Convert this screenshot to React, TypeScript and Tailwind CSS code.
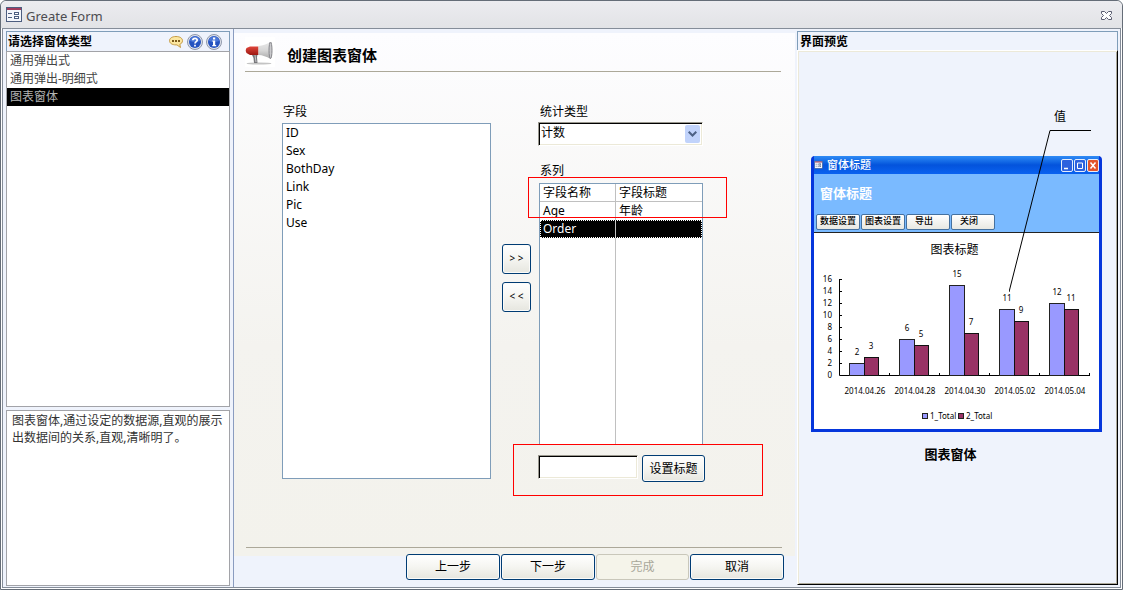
import { useState } from "react";
import clsx from "clsx";

const FORM_TYPES = ["通用弹出式", "通用弹出-明细式", "图表窗体"];
const FIELDS = ["ID", "Sex", "BothDay", "Link", "Pic", "Use"];
const SERIES = [
  { name: "Age", title: "年龄" },
  { name: "Order", title: "" },
];
const CHART = [
  { date: "2014.04.26", first: 2, second: 3 },
  { date: "2014.04.28", first: 6, second: 5 },
  { date: "2014.04.30", first: 15, second: 7 },
  { date: "2014.05.02", first: 11, second: 9 },
  { date: "2014.05.04", first: 12, second: 11 },
];
const TICKS = [0, 2, 4, 6, 8, 10, 12, 14, 16];

const buttonClass =
  "rounded-[3px] border border-[#003c74] bg-linear-to-b from-white via-[#f5f5f1] to-[#e6e6df] text-xs text-black shadow-[inset_0_0_0_1px_#fbfbf9] disabled:border-[#c9c7ba] disabled:bg-none disabled:bg-[#f5f4ea] disabled:text-[#a9a79a] disabled:shadow-none";
const sunkenClass =
  "border border-t-[#9a988e] border-l-[#9a988e] border-r-white border-b-white bg-white text-xs text-black shadow-[inset_1px_1px_0_#000,inset_-1px_-1px_0_#ece9d8] outline-none";

function FormIcon({ className }: { className?: string }) {
  return (
    <svg viewBox="0 0 16 16" className={className} aria-hidden="true">
      <rect x="0.5" y="0.5" width="15" height="14" fill="#f4f6fb" stroke="#4d5e80" />
      <rect x="1" y="1" width="14" height="2" fill="#a13b5d" />
      <path d="M2 6.5h4M2 10.5h4" stroke="#4d5e80" />
      <rect x="8.5" y="5.5" width="4" height="2" fill="#fff" stroke="#4d5e80" />
      <rect x="8.5" y="9.5" width="4" height="2" fill="#fff" stroke="#4d5e80" />
    </svg>
  );
}

function BubbleIcon() {
  return (
    <svg viewBox="0 0 16 16" className="size-4" aria-hidden="true">
      <path
        d="M8 2.5c4 0 6.5 1.8 6.5 4.2 0 1.7-1 2.9-2.7 3.6l.7 3.2L9 10.9H8c-4 0-6.5-1.8-6.5-4.2S4 2.500 8 2.500z"
        fill="#fbe6a0"
        stroke="#c59b45"
      />
      <path d="M4 6h2v2H4zM7 6h2v2H7zM10 6h2v2h-2z" fill="#7b5a1c" />
    </svg>
  );
}

function RoundIcon({ kind }: { kind: "help" | "info" }) {
  return (
    <svg viewBox="0 0 16 16" className="size-4" aria-hidden="true">
      <circle cx="8" cy="8" r="7.5" fill="#dfe3ec" stroke="#8f98ab" />
      <circle cx="8" cy="8" r="6" fill="#2553c0" />
      <path d="M3 7a5 4.5 0 0 1 10 0q-5 2-10 0z" fill="#4a77d8" />
      {kind === "help" ? (
        <g fill="none" stroke="#fff" strokeWidth="1.7">
          <path d="M5.800 6.300C5.900 3.800 10.200 3.900 10.200 6.200 10.200 7.700 8 7.600 8 9.600" />
          <path d="M8 10.7v1.7" />
        </g>
      ) : (
        <path d="M7 3.500h2.200v2H7zM6.300 6.500h2.900v4.600h1v1.200H6.300v-1.200H7V7.600h-.7z" fill="#fff" />
      )}
    </svg>
  );
}

function MegaphoneIcon() {
  return (
    <svg viewBox="0 0 30 30" className="size-[30px] shrink-0" aria-hidden="true">
      <defs>
        <linearGradient id="horn" x1="0" y1="0" x2="0" y2="1">
          <stop offset="0" stopColor="#e9e9e9" />
          <stop offset="0.5" stopColor="#d6d6d6" />
          <stop offset="1" stopColor="#a9a9a9" />
        </linearGradient>
        <linearGradient id="grip" x1="0" y1="0" x2="0" y2="1">
          <stop offset="0" stopColor="#e0463b" />
          <stop offset="1" stopColor="#9c1712" />
        </linearGradient>
      </defs>
      <rect width="30" height="30" fill="#fff" />
      <ellipse cx="14" cy="26.5" rx="12.5" ry="1" fill="#c4c4c4" />
      <path d="M6.5 17h6l-.5 3.500.5 5.500H9l-.5-5z" fill="#77777b" />
      <path d="M10 18l1 7" stroke="#c9c9cc" />
      <path d="M1.500 11L5 9.500h8.500V18H5l-3.500-2Q0 13.500 1.500 11z" fill="url(#grip)" />
      <path d="M13.500 9c4-.3 8-1.800 12-4v17C21.500 19.500 17.500 18.200 13.500 18z" fill="url(#horn)" />
      <ellipse cx="25.5" cy="13.300" rx="1.500" ry="8.300" fill="#c9c9cc" stroke="#85858a" />
    </svg>
  );
}

function Chart() {
  return (
    <svg viewBox="0 0 285 169" className="h-[169px] w-[285px]" role="img" aria-label="图表标题" fontSize="8">
      <path d="M25.5 19v96.5H276" fill="none" stroke="#000" />
      {TICKS.map((tick) => (
        <g key={tick}>
          <path d={`M26 ${115.5 - tick * 6}h2`} stroke="#000" />
          <text x="18" y={118 - tick * 6} textAnchor="end">
            {tick}
          </text>
        </g>
      ))}
      {CHART.map((item, index) => {
        const x = 36 + index * 50;
        return (
          <g key={item.date}>
            <rect x={x - 0.5} y={115.5 - item.first * 6} width="15" height={item.first * 6} fill="#9999ff" stroke="#222" />
            <rect x={x + 14.5} y={115.5 - item.second * 6} width="14" height={item.second * 6} fill="#993366" stroke="#111" />
            <path d={`M${x + 39.5} 113v2`} stroke="#000" />
            <g textAnchor="middle">
              <text x={x + 7} y={107 - item.first * 6}>
                {item.first}
              </text>
              <text x={x + 21} y={107 - item.second * 6}>
                {item.second}
              </text>
              <text x={x + 15} y="134">
                {item.date}
              </text>
            </g>
          </g>
        );
      })}
      <rect x="108.5" y="153.5" width="5" height="5" fill="#9999ff" stroke="#222" />
      <text x="116" y="159">
        1_Total
      </text>
      <rect x="144.5" y="153.5" width="5" height="5" fill="#993366" stroke="#222" />
      <text x="152" y="159">
        2_Total
      </text>
    </svg>
  );
}

function PreviewWindow() {
  return (
    <div className="w-[291px] rounded-t border-x-[3px] border-b-[3px] border-[#0536dc] bg-[#0536dc]">
      <div className="flex h-[18px] items-center gap-1 bg-linear-to-b from-[#2f8bf5] via-[#0453dc] to-[#0a62f0] text-[11px] leading-4 font-medium text-white">
        <FormIcon className="h-2 w-[9px]" />
        <span className="flex-1">窗体标题</span>
        <svg viewBox="0 0 39 13" className="h-[13px] w-[39px]" aria-hidden="true">
          <g stroke="#e5ecfb">
            <rect x="1.5" y="0.5" width="11" height="12" rx="1.5" fill="#2d62de" />
            <rect x="14.5" y="0.5" width="11" height="12" rx="1.5" fill="#2d62de" />
            <rect x="27.5" y="0.5" width="11" height="12" rx="1.5" fill="#e2552d" />
          </g>
          <path d="M4 9.500h4M30.500 3.500l5 6M35.500 3.500l-5 6" stroke="#fff" strokeWidth="1.5" />
          <path d="M17.500 4v5.500h5V4z" fill="none" stroke="#fff" />
        </svg>
      </div>
      <div className="flex h-[59px] flex-col justify-between border-b border-[#222] bg-[#7abaff] px-0.5 pb-0.5">
        <p className="px-1 pt-2.5 text-[13px] leading-[18px] font-bold text-white">窗体标题</p>
        <div className="flex gap-px">
          {["数据设置", "图表设置", "导出", "关闭"].map((label) => (
            <button
              key={label}
              type="button"
              className={clsx(
                "h-4 w-11 rounded-xs border border-[#45719f] bg-linear-to-b from-white to-[#e8e8e2] pb-0.5 text-[9px] leading-3 font-medium",
                label.length < 4 && "pr-2",
              )}
            >
              {label}
            </button>
          ))}
        </div>
      </div>
      <div className="bg-white pt-1.5">
        <p className="pr-1 text-center text-xs leading-[21px]">图表标题</p>
        <Chart />
      </div>
    </div>
  );
}

export default function App() {
  const [formType, setFormType] = useState("图表窗体");
  const [selected, setSelected] = useState("Order");

  return (
    <div className="flex min-h-screen flex-col rounded-t-md border border-[#656d78] bg-white font-['Noto_Sans','Noto_Sans_CJK_SC',sans-serif] text-xs text-black">
      <header className="flex h-[27px] shrink-0 items-center gap-1 rounded-t-md bg-linear-to-b from-[#ececf0] to-[#e2e3e6] pr-[9px] pl-[5px]">
        <FormIcon className="size-4" />
        <h1 className="flex-1 pt-0.5 text-[13px] leading-5 text-[#4c4c50]">Greate Form</h1>
        <button type="button" aria-label="关闭" className="pt-0.5">
          <svg viewBox="0 0 13 11" className="h-[11px] w-[13px]" aria-hidden="true">
            <path
              d="M1.500 1.500h3l2 2 2-2h3v2l-2 2 2 2v2h-3l-2-2-2 2h-3v-2l2-2-2-2z"
              fill="#fff"
              stroke="#5a5d70"
            />
          </svg>
        </button>
      </header>

      <main className="mx-px mb-px flex flex-1 border border-[#858d99] bg-[#eff3fc]">
        <aside className="flex w-[231px] shrink-0 flex-col border-r border-[#8a9cc0] px-[3px] pt-0.5 pb-px">
          <div className="flex h-5 items-center border border-b-0 border-[#7f9db9] px-px">
            <h2 className="flex-1 font-bold">请选择窗体类型</h2>
            <div className="flex gap-[3px] pr-1.5">
              <button type="button" aria-label="消息">
                <BubbleIcon />
              </button>
              <button type="button" aria-label="帮助">
                <RoundIcon kind="help" />
              </button>
              <button type="button" aria-label="信息">
                <RoundIcon kind="info" />
              </button>
            </div>
          </div>
          <ul className="flex-1 border border-[#a2a3a8] bg-white">
            {FORM_TYPES.map((type) => (
              <li key={type}>
                <button
                  type="button"
                  onClick={() => setFormType(type)}
                  className={clsx(
                    "block h-[18px] w-full px-[3px] text-left leading-[18px]",
                    type === formType ? "bg-black text-[#b4b4b4]" : "text-[#444]",
                  )}
                >
                  {type}
                </button>
              </li>
            ))}
          </ul>
          <p className="mt-[3px] h-44 border border-[#a2a3a8] bg-white px-[5px] py-px leading-[17px] text-[#333]">
            图表窗体,通过设定的数据源,直观的展示出数据间的关系,直观,清晰明了。
          </p>
        </aside>

        <form className="flex min-w-0 flex-1 flex-col pt-1" onSubmit={(event) => event.preventDefault()}>
          <section className="mr-0.5 flex flex-1 flex-col bg-linear-to-b from-[#fdfdff] via-[#f4f3ef] via-60% to-[#f3f2ec]">
            <div className="mr-3.5 ml-[11px] flex h-[39px] items-center gap-3 border-b border-[#aca899]">
              <MegaphoneIcon />
              <h2 className="pt-1.5 text-[15px] leading-5 font-bold">创建图表窗体</h2>
            </div>

            <div className="flex flex-1 items-start pt-[31px] pl-12">
              <div className="w-[209px]">
                <h3 className="pl-px leading-[18px]">字段</h3>
                <ul className="mt-0.5 h-[356px] border border-[#7f9db9] bg-white">
                  {FIELDS.map((field) => (
                    <li key={field}>
                      <button type="button" className="block h-[18px] w-full px-[3px] text-left leading-[18px]">
                        {field}
                      </button>
                    </li>
                  ))}
                </ul>
              </div>

              <div className="mt-[141px] ml-[11px] flex flex-col gap-2">
                <button type="button" className={clsx(buttonClass, "h-[30px] w-[29px] text-[10px]")}>
                  &gt; &gt;
                </button>
                <button type="button" className={clsx(buttonClass, "h-[30px] w-[29px] text-[10px]")}>
                  &lt; &lt;
                </button>
              </div>

              <div className="ml-[7px]">
                <label htmlFor="stat" className="block pl-0.5 leading-[18px]">
                  统计类型
                </label>
                <div className="relative mt-px w-[165px]">
                  <select id="stat" className={clsx(sunkenClass, "h-6 w-full appearance-none px-0.5 pb-0.5")}>
                    <option>计数</option>
                  </select>
                  <span className="pointer-events-none absolute top-[3px] right-[3px] flex h-[18px] w-[15px] items-center justify-center rounded-xs bg-[#c1d3fb]">
                    <svg viewBox="0 0 9 6" className="h-1.5 w-[9px]" aria-hidden="true">
                      <path d="M0.700 0.700l3.800 3.800L8.300 0.700" fill="none" stroke="#4d6185" strokeWidth="2" />
                    </svg>
                  </span>
                </div>

                <h3 className="mt-4 pl-0.5 leading-[18px]">系列</h3>
                <div className="relative mt-[3px] w-[165px] pl-px">
                  <table className="h-[261px] w-full table-fixed border-separate border-spacing-0 border border-b-0 border-[#7f9db9] bg-white text-left">
                    <thead>
                      <tr className="h-[18px]">
                        <th className="w-[76px] border-r border-b border-[#c0c0c0] p-0 pl-[3px] leading-[17px] font-normal">
                          字段名称
                        </th>
                        <th className="border-b border-[#c0c0c0] p-0 pl-[3px] leading-[17px] font-normal">字段标题</th>
                      </tr>
                    </thead>
                    <tbody>
                      {SERIES.map((row) => (
                        <tr
                          key={row.name}
                          onClick={() => setSelected(row.name)}
                          className={clsx(
                            "h-[18px]",
                            row.name === selected && "bg-black text-white outline-1 -outline-offset-1 outline-white outline-dotted",
                          )}
                        >
                          <td className="border-r border-[#c0c0c0] p-0 pl-[3px] leading-[18px]">{row.name}</td>
                          <td className="p-0 pl-[3px] leading-[18px]">{row.title}</td>
                        </tr>
                      ))}
                      <tr>
                        <td className="border-r border-[#c0c0c0] p-0" />
                        <td className="p-0" />
                      </tr>
                    </tbody>
                  </table>
                  <span className="pointer-events-none absolute -top-1.5 -left-2.5 h-[41px] w-[199px] border border-[#f00]" />
                </div>

                <div className="relative flex items-start gap-1 pt-[11px]">
                  <input type="text" aria-label="标题" className={clsx(sunkenClass, "h-6 w-[100px] px-1")} />
                  <button type="button" className={clsx(buttonClass, "h-[27px] w-[63px]")}>
                    设置标题
                  </button>
                  <span className="pointer-events-none absolute top-0 -left-[25px] h-[52px] w-[250px] border border-[#f00]" />
                </div>
              </div>
            </div>

            <hr className="mr-[13px] mb-2 ml-3 border-[#aca899]" />
          </section>

          <footer className="-mt-0.5 flex h-[33px] items-start justify-end gap-px pr-[13px]">
            <button type="button" className={clsx(buttonClass, "h-[26px] w-[94px]")}>
              上一步
            </button>
            <button type="button" className={clsx(buttonClass, "h-[26px] w-[94px]")}>
              下一步
            </button>
            <button type="button" disabled className={clsx(buttonClass, "h-[26px] w-[93px]")}>
              完成
            </button>
            <button type="button" className={clsx(buttonClass, "h-[26px] w-[94px]")}>
              取消
            </button>
          </footer>
        </form>

        <aside className="flex w-[323px] shrink-0 flex-col pt-0.5 pr-0.5 pb-0.5">
          <h2 className="h-[19px] border border-b-0 border-[#7f9db9] px-0.5 leading-[19px] font-bold">界面预览</h2>
          <div className="flex-1 border border-t-white border-r-black border-b-black border-l-white shadow-[inset_1px_1px_0_#ece9d8,inset_-1px_-1px_0_#aca899]">
            <div className="relative pt-[105px] pl-[13px]">
              <PreviewWindow />
              <span className="absolute top-14 left-64 leading-[20px]">值</span>
              <svg viewBox="0 0 83 162" className="absolute top-[79px] left-[211px] h-[162px] w-[83px]" aria-hidden="true">
                <path d="M82 0.500H41L0 162" fill="none" stroke="#000" />
              </svg>
            </div>
            <p className="mt-3 pr-3.5 text-center text-[13px] leading-5 font-bold">图表窗体</p>
          </div>
        </aside>
      </main>
    </div>
  );
}
